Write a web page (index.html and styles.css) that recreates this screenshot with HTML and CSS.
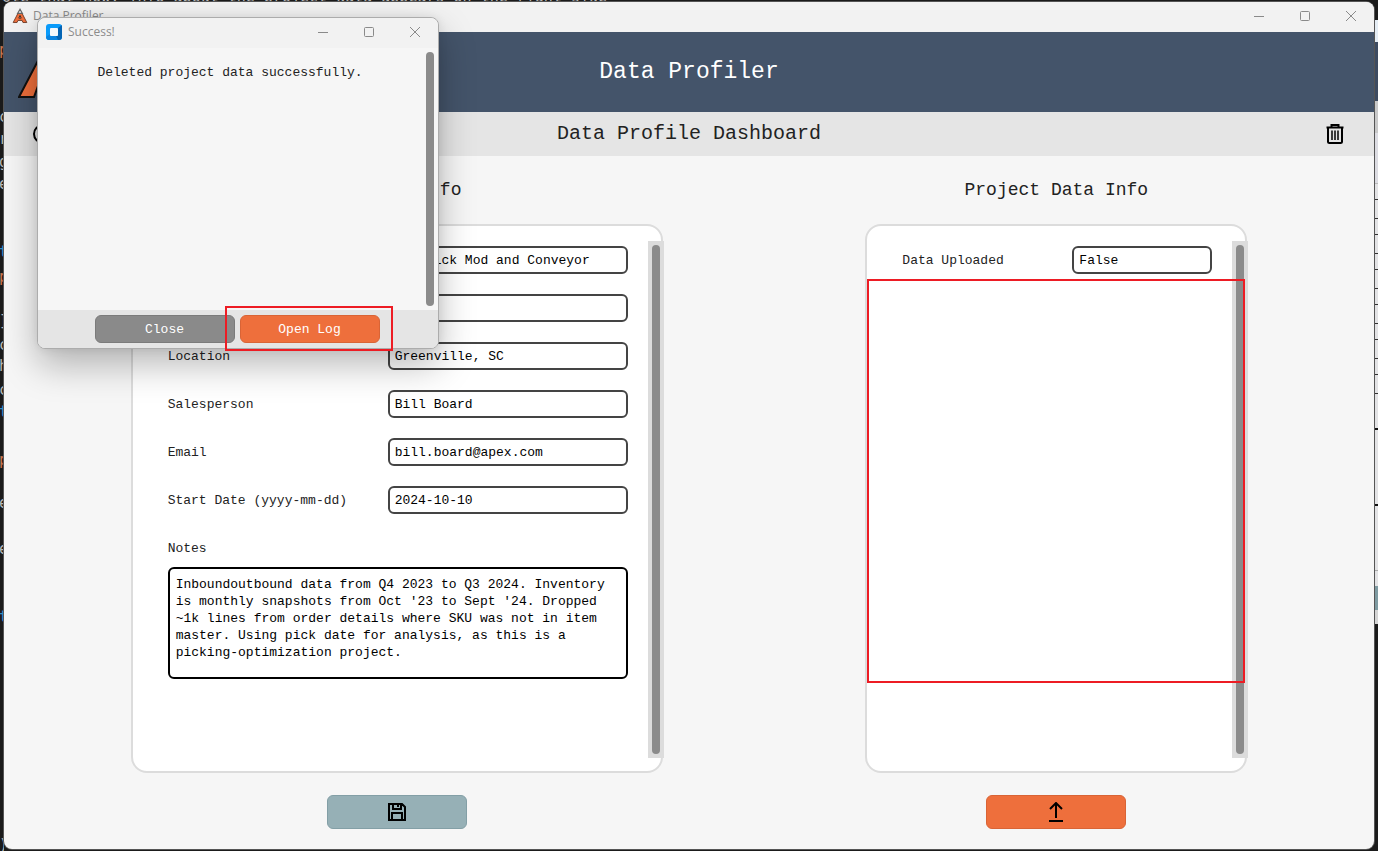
FILE: index.html
```html
<!DOCTYPE html>
<html lang="en">
<head>
<meta charset="utf-8">
<title>Data Profiler</title>
<meta name="viewport" content="width=device-width, initial-scale=1">
<link rel="stylesheet" href="styles.css">
</head>
<body>
<div class="desktop" aria-hidden="true">
  <div class="editor-line">ote that now, info about the project data appears on the right side</div>
  <div class="editor-gutter">
    <span class="glyph string" style="top:50px">p</span>
    <span class="glyph" style="top:117px">c</span>
    <span class="glyph" style="top:139px">r</span>
    <span class="glyph" style="top:162px">g</span>
    <span class="glyph" style="top:184px">e</span>
    <span class="glyph keyword" style="top:252px">t</span>
    <span class="glyph string" style="top:277px">p</span>
    <span class="glyph" style="top:321px">]</span>
    <span class="glyph" style="top:345px">c</span>
    <span class="glyph" style="top:366px">h</span>
    <span class="glyph" style="top:390px">c</span>
    <span class="glyph keyword" style="top:412px">t</span>
    <span class="glyph string" style="top:460px">p</span>
    <span class="glyph" style="top:503px">e</span>
    <span class="glyph" style="top:549px">e</span>
    <span class="glyph keyword" style="top:617px">t</span>
    <span class="glyph" style="top:845px">)</span>
  </div>
  <div class="back-window">
    <div class="strip-title"></div>
    <div class="strip-header"></div>
    <div class="strip-sub"></div>
    <div class="strip-space"></div>
    <div class="strip-field"></div>
    <div class="strip-field"></div>
    <div class="strip-field"></div>
    <div class="strip-field"></div>
    <div class="strip-field"></div>
    <div class="strip-field"></div>
    <div class="strip-notes"></div>
    <div class="strip-rest"></div>
    <div class="strip-button"></div>
  </div>
</div>

<div class="window">
  <div class="titlebar">
    <svg class="app-icon" viewBox="0 0 54 54"><path d="M4 49 20 18h14l16 31H37l-3-7H20l-3 7z" fill="#ee6f3c" stroke="#6b3a26" stroke-width="3"/><path d="M27 4 19 18h16z" fill="#f2f2f2" stroke="#666" stroke-width="4"/><path d="M23 34h8l-4-9z" fill="#eee" stroke="#3a2018" stroke-width="3"/></svg>
    <span class="titlebar-text">Data Profiler</span>
    <button class="caption-btn" aria-label="Minimize"><svg viewBox="0 0 12 12"><path d="M1 6.5h10"/></svg></button>
    <button class="caption-btn" aria-label="Maximize"><svg viewBox="0 0 12 12"><rect x="1.5" y="1.5" width="9" height="9" rx="1"/></svg></button>
    <button class="caption-btn" aria-label="Close window"><svg viewBox="0 0 12 12"><path d="m1 1 10 10M11 1 1 11"/></svg></button>
  </div>

  <header class="header">
    <svg class="logo" viewBox="0 0 54 54"><path d="M1 52 24 8h6l23 44H38l-4-11H20l-4 11z" fill="#ee6f3c" stroke="#111" stroke-width="2"/><path d="M22 34h10l-5-13z" fill="#44546a" stroke="#111" stroke-width="2"/></svg>
    <h1 class="header-title">Data Profiler</h1>
  </header>

  <div class="subheader">
    <button class="icon-btn" aria-label="Back"><svg viewBox="0 0 22 22"><circle cx="11" cy="11" r="9"/><path d="M15 11H7m4-4-4 4 4 4"/></svg></button>
    <h2 class="subheader-title">Data Profile Dashboard</h2>
    <button class="icon-btn" aria-label="Delete project data"><svg viewBox="0 0 22 22"><path d="M2.500 4.500h17M7.500 4V2h7v2M4 5v13.500q0 1.500 1.500 1.500h11q1.500 0 1.500-1.500V5" stroke-width="2"/><path d="M8 7.500v9.500M11 7.500v9.500M14 7.500v9.500" stroke-width="1.500"/></svg></button>
  </div>

  <main class="content">
    <section class="column column-project">
      <h3 class="column-title">Project Info</h3>
      <div class="panel">
        <form class="fields">
          <label for="name">Project</label>
          <input id="name" type="text" value="New Pick Mod and Conveyor">
          <label for="company">Company</label>
          <input id="company" type="text">
          <label for="location">Location</label>
          <input id="location" type="text" value="Greenville, SC">
          <label for="sales">Salesperson</label>
          <input id="sales" type="text" value="Bill Board">
          <label for="email">Email</label>
          <input id="email" type="text" value="bill.board@apex.com">
          <label for="start">Start Date (yyyy-mm-dd)</label>
          <input id="start" type="text" value="2024-10-10">
          <div class="notes">
            <label for="notes">Notes</label>
            <textarea id="notes" spellcheck="false">Inboundoutbound data from Q4 2023 to Q3 2024. Inventory is monthly snapshots from Oct '23 to Sept '24. Dropped ~1k lines from order details where SKU was not in item master. Using pick date for analysis, as this is a picking-optimization project.</textarea>
          </div>
        </form>
        <div class="scroll-track"><div class="scroll-thumb"></div></div>
      </div>
      <button class="btn btn-tall btn-save" aria-label="Save"><svg viewBox="0 0 20 20"><path d="M2 2h13l3 3v13H2zM6 2v5h8V2M11 3v2M5 18v-7h10v7"/></svg></button>
    </section>

    <section class="column column-data">
      <h3 class="column-title">Project Data Info</h3>
      <div class="panel">
        <form class="fields">
          <label for="uploaded">Data Uploaded</label>
          <input id="uploaded" type="text" value="False">
        </form>
        <div class="scroll-track"><div class="scroll-thumb"></div></div>
        <div class="mark mark-data"></div>
      </div>
      <button class="btn btn-tall btn-primary" aria-label="Upload"><svg viewBox="0 0 20 20"><path d="M10 16V1M4 7l6-6 6 6M3 19h14"/></svg></button>
    </section>
  </main>
</div>

<div class="dialog" role="dialog" aria-labelledby="dialog-title">
  <div class="titlebar dialog-titlebar">
    <svg class="dialog-icon" viewBox="0 0 16 16"><rect width="16" height="16" rx="3" fill="#0a9bfa"/><path d="M12 4 16 1v12q0 3-3 3H2l2-4h8z" fill="#0464b4"/><path d="M2 16q-2-1-2-3l4-3 2 2h4l2 4z" fill="#0a84e0"/><rect x="4" y="4" width="8" height="8" rx="1" fill="#f4f8fc"/></svg>
    <span class="titlebar-text" id="dialog-title">Success!</span>
    <button class="caption-btn" aria-label="Minimize"><svg viewBox="0 0 12 12"><path d="M1 6.5h10"/></svg></button>
    <button class="caption-btn" aria-label="Maximize"><svg viewBox="0 0 12 12"><rect x="1.5" y="1.5" width="9" height="9" rx="1"/></svg></button>
    <button class="caption-btn" aria-label="Close window"><svg viewBox="0 0 12 12"><path d="m1 1 10 10M11 1 1 11"/></svg></button>
  </div>
  <div class="dialog-body">
    <p class="dialog-message">Deleted project data successfully.</p>
    <div class="scroll-thumb"></div>
  </div>
  <div class="dialog-footer">
    <button class="btn btn-muted">Close</button>
    <button class="btn btn-primary">Open Log</button>
    <div class="mark mark-log"></div>
  </div>
</div>
</body>
</html>
```
FILE: styles.css
```css
* { box-sizing: border-box; }

body {
  margin: 0;
  min-height: 100vh;
  padding: 2px 4px;
  display: flex;
  background: #1b1b1b;
  color: #222;
  font: 13px/17px "Liberation Mono", "Courier New", monospace;
}

button, input, textarea { font: inherit; color: inherit; margin: 0; }
h1, h2, h3, p { margin: 0; font-weight: 400; }

/* Desktop behind the window */
.desktop {
  position: absolute;
  inset: 0;
  overflow: hidden;
  font: 15px/18px "DejaVu Sans Mono", monospace;
  color: #b8b8b8;
}
.editor-line {
  position: absolute;
  top: -12px;
  left: 2px;
  white-space: pre;
}
.editor-gutter {
  position: absolute;
  inset: 0 auto 0 0;
  width: 4px;
  overflow: hidden;
}
.glyph { position: absolute; left: -1px; transform: translateY(-50%); }
.string { color: #ce7650; }
.keyword { color: #2d8fc8; }

.back-window {
  position: absolute;
  top: 20px;
  right: 0;
  width: 6px;
  background: #e3e3e5;
}
.strip-title { height: 22px; background: #e4ecf4; }
.strip-header { height: 59px; background: #3d4b61; }
.strip-sub { height: 32px; background: #c9c9c9; }
.strip-space { height: 66px; background: linear-gradient(#dcdce2 50px, #bbb 50px, #bbb 51px, #e3e3e5 51px); }
.strip-field { height: 20px; margin-bottom: 15px; border: solid #333; border-width: 1px 0; }
.strip-notes { height: 78px; margin-top: 34px; border: solid #111; border-width: 2px 0; }
.strip-rest { height: 65px; margin-bottom: 15px; border-bottom: 1px solid #aaa; }
.strip-button { height: 38px; border-bottom: 14px solid #d5d5d5; background: #7f9ba2; }

/* Main window */
.window {
  position: relative;
  flex: 1;
  display: flex;
  flex-direction: column;
  overflow: hidden;
  border-radius: 8px;
  background: #f6f6f6;
  box-shadow: 0 0 0 1px #555;
}
.titlebar {
  height: 30px;
  padding: 0 0 2px 8px;
  display: flex;
  align-items: center;
  background: #f2f2f2;
  font: 12px/16px "Open Sans", "Noto Sans", sans-serif;
  color: #8c8c8c;
}
.titlebar-text { margin-right: auto; }
.app-icon { width: 16px; height: 16px; margin-right: 5px; }
.dialog-icon { width: 16px; height: 16px; margin-right: 6px; }
.caption-btn {
  width: 46px;
  height: 28px;
  padding: 0;
  display: grid;
  place-items: center;
  border: 0;
  background: none;
}
.caption-btn svg { width: 12px; height: 12px; fill: none; stroke: #8a8a8a; }

.header {
  height: 80px;
  display: grid;
  grid-template-columns: 80px 1fr 80px;
  align-items: center;
  background: #44546a;
}
.logo { width: 54px; height: 54px; margin: 0 14px; }
.header-title { text-align: center; font-size: 23px; line-height: 28px; color: #fff; }

.subheader {
  height: 44px;
  padding: 0 28px;
  display: flex;
  align-items: center;
  justify-content: space-between;
  background: #e5e5e5;
}
.subheader-title { font-size: 20px; line-height: 24px; }
.icon-btn { width: 22px; height: 22px; padding: 0; border: 0; background: none; }
.icon-btn svg { display: block; fill: none; stroke: #000; stroke-width: 2; }

.content {
  flex: 1;
  display: grid;
  grid-template-columns: 5fr 532px 8fr 382px 5fr;
  padding-bottom: 20px;
}
.column { display: flex; flex-direction: column; align-items: center; }
.column-project { grid-column: 2; }
.column-data { grid-column: 4; }
.column-title { padding: 22px 0; font-size: 18px; line-height: 24px; }

.panel {
  position: relative;
  flex: 1;
  align-self: stretch;
  min-height: 480px;
  margin-bottom: 22px;
  padding: 20px 35px;
  border: 2px solid #dcdcdc;
  border-radius: 16px;
  background: #fff;
}
.scroll-track {
  position: absolute;
  top: 15px;
  right: -3px;
  bottom: 13px;
  width: 16px;
  padding: 4px;
  background: #dcdcdc;
}
.scroll-thumb { width: 8px; height: 100%; border-radius: 4px; background: #8b8b8b; }

.fields {
  display: grid;
  grid-template-columns: 220px 240px;
  grid-auto-rows: minmax(28px, auto);
  row-gap: 20px;
  align-items: center;
}
.column-data .fields { grid-template-columns: 170px 140px; }
.fields input {
  width: 100%;
  height: 28px;
  padding: 0 5px;
  border: 2px solid #444;
  border-radius: 6px;
  background: #fff;
  color: #000;
}
.notes { grid-column: 1 / -1; }
.notes label { display: block; padding: 6px 0 10px; }
.notes textarea {
  display: block;
  width: 100%;
  height: 112px;
  padding: 7px 6px;
  border: 2px solid #000;
  border-radius: 6px;
  background: #fff;
  color: #000;
  resize: none;
  overflow: hidden;
}

.btn {
  width: 140px;
  height: 28px;
  padding: 0;
  display: grid;
  place-items: center;
  border: 1px solid #7b7b7b;
  border-radius: 6px;
  color: #fff;
}
.btn-tall { height: 34px; }
.btn svg { width: 20px; height: 20px; fill: none; stroke: #000; stroke-width: 2; }
.btn-muted { background: #8a8a8a; }
.btn-primary { background: #ee6f3c; border-color: #d96436; }
.btn-save { background: #96b0b6; border-color: #839fa6; }

/* Message box */
.dialog {
  position: absolute;
  top: 17px;
  left: 37px;
  width: 402px;
  border: 1px solid #acacac;
  border-radius: 8px;
  background: #f6f6f6;
  box-shadow: 0 16px 36px rgba(0, 0, 0, 0.28), 0 0 10px rgba(0, 0, 0, 0.08);
}
.dialog-titlebar { border-radius: 8px 8px 0 0; }
.dialog-body { height: 262px; padding: 4px; display: flex; }
.dialog-message { flex: 1; padding: 12px 8px 0 0; text-align: center; }
.dialog-footer {
  position: relative;
  padding: 5px 2px 5px 0;
  display: flex;
  justify-content: center;
  gap: 5px;
  border-radius: 0 0 7px 7px;
  background: #e5e5e5;
}

/* Highlight frames */
.mark { position: absolute; border: 2px solid #ed1c24; pointer-events: none; }
.mark-data { top: 53px; left: 0; right: 0; height: 404px; }
.mark-log { top: -4px; left: 187px; width: 168px; height: 45px; }
```
